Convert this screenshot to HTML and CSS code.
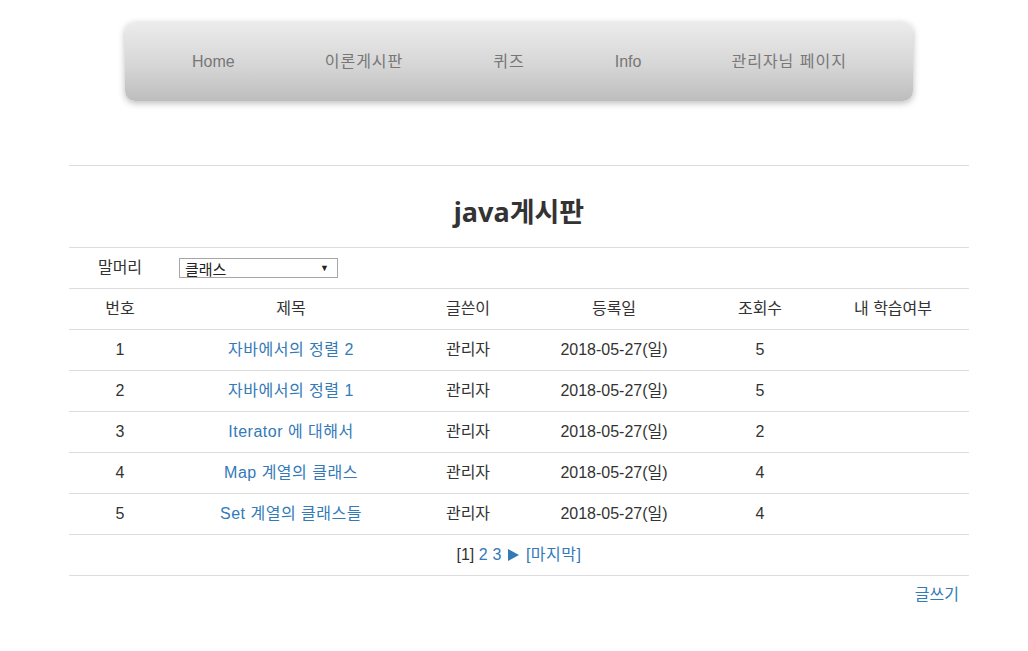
FILE: index.html
```html
<!DOCTYPE html>
<html lang="ko">
<head>
<meta charset="utf-8">
<title>java게시판</title>
<link rel="stylesheet" href="styles.css">
</head>
<body>
<div class="wrap">
  <nav class="nav">
    <a class="nav-item" href="#">Home</a>
    <a class="nav-item ko" href="#">이론게시판</a>
    <a class="nav-item ko" href="#">퀴즈</a>
    <a class="nav-item" href="#">Info</a>
    <a class="nav-item ko" href="#">관리자님 페이지</a>
  </nav>

  <table class="board">
    <colgroup>
      <col class="c1"><col class="c2"><col class="c3"><col class="c4"><col class="c5"><col class="c6">
    </colgroup>
    <tr class="title-row"><td colspan="6"><h1 class="title">java게시판</h1></td></tr>
    <tr>
      <td>말머리</td>
      <td colspan="5" class="left">
        <div class="select"><span>클래스</span><span class="arrow">▼</span></div>
      </td>
    </tr>
    <tr>
      <td>번호</td><td>제목</td><td>글쓴이</td><td>등록일</td><td>조회수</td><td>내 학습여부</td>
    </tr>
    <tr><td>1</td><td><a href="#">자바에서의 정렬 2</a></td><td>관리자</td><td>2018-05-27(일)</td><td>5</td><td></td></tr>
    <tr><td>2</td><td><a href="#">자바에서의 정렬 1</a></td><td>관리자</td><td>2018-05-27(일)</td><td>5</td><td></td></tr>
    <tr><td>3</td><td><a href="#">Iterator 에 대해서</a></td><td>관리자</td><td>2018-05-27(일)</td><td>2</td><td></td></tr>
    <tr><td>4</td><td><a href="#">Map 계열의 클래스</a></td><td>관리자</td><td>2018-05-27(일)</td><td>4</td><td></td></tr>
    <tr><td>5</td><td><a href="#">Set 계열의 클래스들</a></td><td>관리자</td><td>2018-05-27(일)</td><td>4</td><td></td></tr>
    <tr>
      <td colspan="6" class="pager">
        <span class="cur">[1]</span> <a href="#">2</a> <a href="#">3</a>
        <a href="#" class="next"><svg width="11" height="12" viewBox="0 0 11 12"><polygon points="0,0 11,6 0,12" fill="#337ab7"/></svg></a>
        <a href="#">[마지막]</a>
      </td>
    </tr>
  </table>
  <div class="write"><a href="#">글쓰기</a></div>
</div>
</body>
</html>
```

FILE: styles.css
```css
html, body {
  margin: 0;
  padding: 0;
  background: #fff;
}
body {
  font-family: "Liberation Sans", "Noto Sans CJK KR", sans-serif;
  font-size: 16px;
  color: #333;
}
a {
  color: #337ab7;
  text-decoration: none;
}
.wrap {
  width: 900px;
  margin-left: 69px;
  padding-top: 22px;
}
.nav {
  width: 788px;
  height: 79px;
  margin: 0 auto;
  box-sizing: border-box;
  padding-left: 67px;
  display: flex;
  align-items: center;
  gap: 90px;
  border-radius: 10px;
  background: linear-gradient(to bottom, #ececec 0%, #d6d6d6 55%, #bdbdbd 100%);
  box-shadow: 0 2px 7px rgba(0, 0, 0, 0.28);
}
.nav-item {
  color: #777;
  font-size: 16px;
  line-height: 20px;
}
.nav-item.ko {
  letter-spacing: 1px;
}
.board {
  width: 900px;
  margin-top: 64px;
  border-collapse: collapse;
  table-layout: fixed;
}
.c1 { width: 102px; }
.c2 { width: 240px; }
.c3 { width: 114px; }
.c4 { width: 178px; }
.c5 { width: 114px; }
.c6 { width: 152px; }
.board td {
  border-top: 1px solid #ddd;
  height: 41px;
  padding: 0 8px;
  box-sizing: border-box;
  text-align: center;
  vertical-align: middle;
  line-height: 24px;
  white-space: nowrap;
}
.board td a {
  letter-spacing: 0.5px;
}
.board tr:last-child td {
  border-bottom: 1px solid #ddd;
}
.board .title-row td {
  height: 82px;
}
.title {
  margin: 0;
  padding-top: 10px;
  font-family: "Noto Sans", "Noto Sans CJK KR", sans-serif;
  font-size: 27px;
  font-weight: bold;
  line-height: 30px;
  color: #333;
}
.board td.left {
  text-align: left;
}
.select {
  width: 159px;
  height: 20px;
  box-sizing: border-box;
  border: 1px solid #a6a6a6;
  display: flex;
  align-items: center;
  justify-content: space-between;
  padding: 0 8px 0 5px;
  font-size: 15px;
  line-height: 18px;
  color: #222;
  background: #fff;
}
.select span:first-child {
  padding-top: 3px;
}
.arrow {
  font-size: 9px;
  color: #222;
}
.pager {
  font-size: 16px;
}
.pager a {
  letter-spacing: 0;
}
.pager .cur {
  color: #333;
}
.next svg {
  vertical-align: -1px;
  margin: 0 2px;
}
.write {
  text-align: right;
  padding: 8px 10px 0 0;
  line-height: 22px;
}
```
